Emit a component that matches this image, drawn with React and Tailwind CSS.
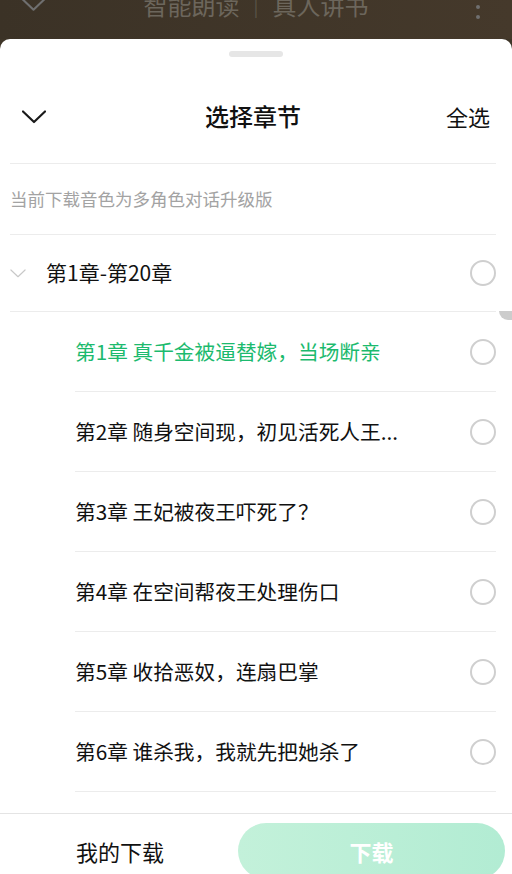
import React from 'react';

const chapters = [
  { title: '第1章 真千金被逼替嫁，当场断亲', active: true },
  { title: '第2章 随身空间现，初见活死人王...' },
  { title: '第3章 王妃被夜王吓死了？' },
  { title: '第4章 在空间帮夜王处理伤口' },
  { title: '第5章 收拾恶奴，连扇巴掌' },
  { title: '第6章 谁杀我，我就先把她杀了' },
];

const font = { fontFamily: '"Noto Sans CJK SC", "Noto Sans", sans-serif' };

function Chevron({ className, stroke = '#222', width = 2 }) {
  return (
    <svg viewBox="0 0 24 14" className={className} fill="none">
      <path d="M1 1.5 L12 12 L23 1.5" stroke={stroke} strokeWidth={width} strokeLinecap="round" strokeLinejoin="round" />
    </svg>
  );
}

function Radio() {
  return <div className="w-[26px] h-[26px] rounded-full border-2 border-[#cfcfcf] shrink-0" />;
}

export default function App() {
  return (
    <div className="relative h-[874px] w-[512px] overflow-hidden flex flex-col bg-[#3e3528]" style={font}>
      {/* Player header behind the sheet */}
      <div className="relative h-[39px] shrink-0 bg-gradient-to-r from-[#3b3226] to-[#45392b]">
        <Chevron className="absolute left-[21px] top-[-3px] w-[25px] h-[15px]" stroke="#6f6f6f" width={2} />
        <div className="absolute left-0 right-0 top-[-12px] flex justify-center items-center text-[24px] leading-[34px] text-[#6c665c]">
          <span>智能朗读</span>
          <span className="mx-[14px] text-[18px] text-[#5a5448]">|</span>
          <span>真人讲书</span>
        </div>
        <div className="absolute left-[476px] top-[5px] flex flex-col gap-[6px]">
          <div className="w-[4px] h-[4px] rounded-full bg-[#6f6f6f]" />
          <div className="w-[4px] h-[4px] rounded-full bg-[#6f6f6f]" />
        </div>
      </div>

      {/* Bottom sheet */}
      <div className="relative flex-1 flex flex-col bg-white rounded-t-[10px] overflow-hidden">
        <div className="mt-[12px] mx-auto w-[54px] h-[6px] rounded-full bg-[#e6e6e6] shrink-0" />

        <div className="ml-[10px] mr-[16px] flex flex-col flex-1 overflow-hidden">
          <div className="relative mt-[12px] h-[95px] shrink-0 flex items-center justify-center border-b border-[#ececec]">
            <Chevron className="absolute left-[12px] top-[41px] w-[24px] h-[14px]" stroke="#1a1a1a" width={2.2} />
            <span className="text-[24px] font-medium text-[#111]">选择章节</span>
            <span className="absolute right-[6px] text-[22px] text-[#111]">全选</span>
          </div>

          <div className="h-[71px] shrink-0 flex items-center border-b border-[#ececec] text-[17.5px] text-[#a3a3a3]">
            当前下载音色为多角色对话升级版
          </div>

          <div className="h-[77px] shrink-0 flex items-center border-b border-[#ececec]">
            <Chevron className="w-[16px] h-[9px] mr-[20px]" stroke="#c8c8c8" width={1.8} />
            <span className="flex-1 text-[21px] text-[#111]">第1章-第20章</span>
            <Radio />
          </div>

          <div className="flex flex-col">
            {chapters.map((c, i) => (
              <div key={i} className="ml-[65px] h-[80px] shrink-0 flex items-center border-b border-[#ececec]">
                <span className={`flex-1 text-[20.7px] ${c.active ? 'text-[#1cba6e]' : 'text-[#111]'}`}>
                  {c.title}
                </span>
                <Radio />
              </div>
            ))}
          </div>
        </div>

        {/* fast-scroll thumb */}
        <div className="absolute left-[499px] top-[272px] w-[13px] h-[9px] rounded-bl-[12px] bg-[#cccccc]" />

        <div className="h-[61px] shrink-0 border-t border-[#e4e4e4] flex items-start bg-white">
          <div className="w-[238px] h-[56px] mt-[9px] flex items-center pl-[76px] text-[22px] text-[#111]">
            我的下载
          </div>
          <button className="mt-[9px] w-[267px] h-[56px] rounded-full bg-gradient-to-r from-[#c3f1da] to-[#b2ecd3] text-white text-[22px] font-bold">
            下载
          </button>
        </div>
      </div>
    </div>
  );
}
